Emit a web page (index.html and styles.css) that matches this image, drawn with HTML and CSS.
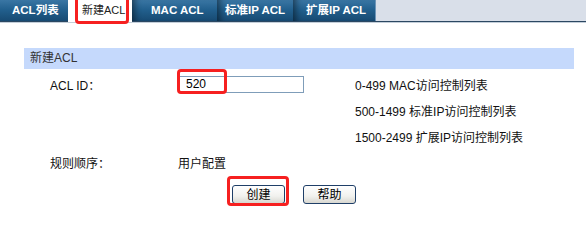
FILE: index.html
```html
<!DOCTYPE html>
<html lang="zh-CN">
<head>
<meta charset="utf-8">
<title>新建ACL</title>
<link rel="stylesheet" href="styles.css">
</head>
<body>
<div class="tabs">
  <div class="tab t1">ACL列表</div>
  <div class="tab active t2">新建ACL</div>
  <div class="tab t3">MAC ACL</div>
  <div class="tab t4">标准IP ACL</div>
  <div class="tab t5">扩展IP ACL</div>
</div>
<div class="panel">
  <div class="panel-head">新建ACL</div>
  <div class="form">
    <div class="label">ACL ID：</div>
    <div class="value"><input class="field" type="text" value="520"></div>
    <div class="hint">0-499 MAC访问控制列表</div>
    <div class="hint r2">500-1499 标准IP访问控制列表</div>
    <div class="hint r3">1500-2499 扩展IP访问控制列表</div>
    <div class="label">规则顺序：</div>
    <div class="value">用户配置</div>
  </div>
  <div class="actions">
    <button class="btn">创建</button>
    <button class="btn">帮助</button>
  </div>
</div>
<div class="mark mark-tab"></div>
<div class="mark mark-input"></div>
<div class="mark mark-btn"></div>
</body>
</html>
```
FILE: styles.css
```css
html, body {
  margin: 0;
  padding: 0;
  background: #fff;
}
body {
  position: relative;
  width: 586px;
  height: 213px;
  overflow: hidden;
  font-family: "Liberation Sans", "Noto Sans CJK SC", sans-serif;
  font-size: 12px;
  color: #111;
}
.tabs {
  display: flex;
  height: 21px;
  background: #d9dfe9;
  border-bottom: 1px solid #2c4862;
  box-shadow: 0 1px 0 #c3ced9;
}
.tab {
  box-sizing: border-box;
  height: 21px;
  line-height: 21px;
  font-size: 11.5px;
  font-weight: bold;
  color: #fff;
  background: linear-gradient(#3a76a4, #22608e 45%, #174a72);
  box-shadow: inset 8px 0 6px -5px rgba(0, 0, 0, 0.45);
  white-space: nowrap;
}
.t1 { width: 68px; padding-left: 12px; box-shadow: none; }
.t2 { width: 64px; padding-left: 14px; }
.t3 { width: 85px; padding-left: 19px; }
.t4 { width: 76px; padding-left: 8px; }
.t5 { width: 83px; padding-left: 13px; box-shadow: inset 8px 0 6px -5px rgba(0, 0, 0, 0.45), inset -11px 0 0 -10px #6d95b8; }
.tab.active {
  background: #fff;
  color: #222;
  font-weight: normal;
  font-size: 11px;
  height: 22px;
  box-shadow: none;
}
.panel {
  margin: 26px 0 0 24px;
  width: 550px;
}
.panel-head {
  height: 21px;
  line-height: 21px;
  padding-left: 6px;
  background: #c5d9fc;
  color: #333;
}
.form {
  display: grid;
  grid-template-columns: 128px 177px 1fr;
  grid-auto-rows: 26px;
  align-items: center;
  margin-top: 2px;
  padding-left: 26px;
}
.hint { grid-column: 3; }
.r2, .r3 { grid-column: 3; }
.field {
  box-sizing: border-box;
  width: 126px;
  height: 17px;
  margin: 0;
  padding: 0 0 0 7px;
  border: 1px solid #7f9db9;
  font-family: "Liberation Sans", sans-serif;
  font-size: 12px;
  color: #000;
  display: block;
}
.actions {
  display: flex;
  gap: 18px;
  padding-left: 208px;
  margin-top: 10px;
}
.btn {
  box-sizing: border-box;
  width: 53px;
  height: 19px;
  padding: 0;
  border: 1px solid #1f3f68;
  border-radius: 3px;
  background: linear-gradient(#ffffff, #f1f1ee 60%, #d8d7d0);
  font-family: "Liberation Sans", "Noto Sans CJK SC", sans-serif;
  font-size: 12px;
  color: #000;
  line-height: 16px;
}
.mark {
  position: absolute;
  box-sizing: border-box;
  border: 3px solid #f62020;
  border-radius: 4px;
}
.mark-tab { left: 75px; top: -4px; width: 54px; height: 28px; }
.mark-input { left: 177px; top: 69px; width: 50px; height: 25px; }
.mark-btn { left: 227px; top: 176px; width: 62px; height: 30px; }
```
